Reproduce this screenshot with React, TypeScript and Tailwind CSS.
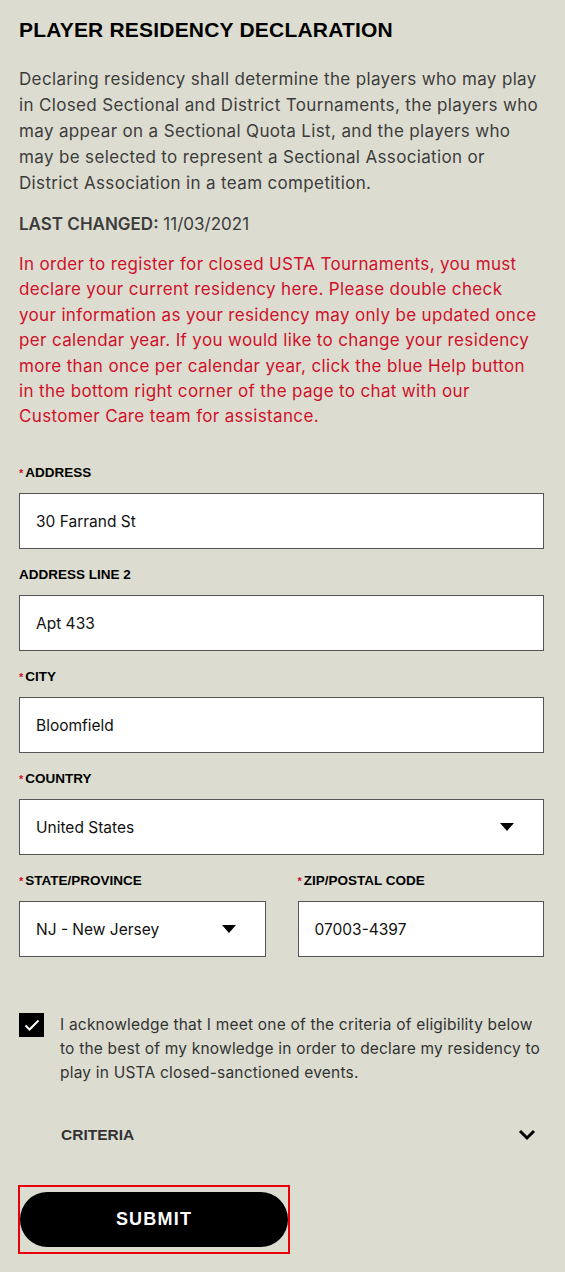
import { useState } from "react";

function Label({ text, required }: { text: string; required?: boolean }) {
  return (
    <p className="flex items-baseline text-[13.5px] font-bold text-black leading-none font-['Liberation_Sans',Arial,sans-serif]">
      {required && <span className="text-[#d0102b] text-[11px] mr-[2px]">*</span>}
      {text}
    </p>
  );
}

function Field({ label, value, required, select }: { label: string; value: string; required?: boolean; select?: boolean }) {
  return (
    <div className="flex flex-col gap-[14px]">
      <Label text={label} required={required} />
      <div className="h-[56px] bg-white border border-[#555] flex items-center justify-between pl-[16px] pr-[29px]">
        <span className="text-[15.5px] text-[#111]">{value}</span>
        {select && (
          <svg width="14" height="8" viewBox="0 0 14 8" className="shrink-0">
            <path d="M0 0 H14 L7 8 Z" fill="#000" />
          </svg>
        )}
      </div>
    </div>
  );
}

export default function App() {
  const [checked, setChecked] = useState(true);

  return (
    <div className="font-['Inter','Liberation_Sans',sans-serif] min-h-[1272px] bg-[#dcddd0] pl-[19px] pr-[21px] pt-[17px] pb-[20px] text-[#333]">
      <h1 className="text-[21px] font-bold text-black leading-[26px] tracking-[0.2px] font-['Liberation_Sans',Arial,sans-serif]">
        PLAYER RESIDENCY DECLARATION
      </h1>

      <p className="mt-[23px] text-[17px] leading-[26px] tracking-[0.35px] text-[#3c3c3c]">
        Declaring residency shall determine the players who may play in Closed Sectional and District Tournaments, the players who may appear on a Sectional Quota List, and the players who may be selected to represent a Sectional Association or District Association in a team competition.
      </p>

      <p className="mt-[15px] text-[17px] leading-[26px] text-[#3c3c3c]">
        <span className="font-semibold">LAST CHANGED:</span> 11/03/2021
      </p>

      <p className="mt-[15px] text-[17px] leading-[25.4px] tracking-[0.35px] text-[#d0102b]">
        In order to register for closed USTA Tournaments, you must declare your current residency here. Please double check your information as your residency may only be updated once per calendar year. If you would like to change your residency more than once per calendar year, click the blue Help button in the bottom right corner of the page to chat with our Customer Care team for assistance.
      </p>

      <div className="mt-[36px] flex flex-col gap-[18.5px]">
        <Field label="ADDRESS" value="30 Farrand St" required />
        <Field label="ADDRESS LINE 2" value="Apt 433" />
        <Field label="CITY" value="Bloomfield" required />
        <Field label="COUNTRY" value="United States" required select />
        <div className="grid grid-cols-2 gap-[32px]">
          <Field label="STATE/PROVINCE" value="NJ - New Jersey" required select />
          <Field label="ZIP/POSTAL CODE" value="07003-4397" required />
        </div>
      </div>

      <div className="mt-[56px] flex gap-[16px]">
        <button
          onClick={() => setChecked(!checked)}
          className="w-[25px] h-[24px] bg-black shrink-0 flex items-center justify-center"
        >
          {checked && (
            <svg width="16" height="12" viewBox="0 0 16 12">
              <path d="M1.5 6.5 L5.5 10.5 L14.5 1.5" stroke="#fff" strokeWidth="2" fill="none" />
            </svg>
          )}
        </button>
        <p className="text-[15.5px] leading-[24px] tracking-[0.2px] text-[#333]">
          I acknowledge that I meet one of the criteria of eligibility below to the best of my knowledge in order to declare my residency to play in USTA closed-sanctioned events.
        </p>
      </div>

      <div className="mt-[38px] flex items-center justify-between pl-[42px] pr-[8px]">
        <span className="text-[15.5px] font-bold text-[#333] font-['Liberation_Sans',Arial,sans-serif]">CRITERIA</span>
        <svg width="18" height="12" viewBox="0 0 18 12">
          <path d="M2 2 L9 9 L16 2" stroke="#000" strokeWidth="3" fill="none" />
        </svg>
      </div>

      <div className="mt-[38px] inline-flex border-2 border-[#e8000d] pt-[5px] pb-[5px] ml-[-1px]">
        <button className="w-[268px] h-[55px] rounded-full bg-black text-white text-[18px] font-bold tracking-[1.2px] font-['Liberation_Sans',Arial,sans-serif]">
          SUBMIT
        </button>
      </div>
    </div>
  );
}
